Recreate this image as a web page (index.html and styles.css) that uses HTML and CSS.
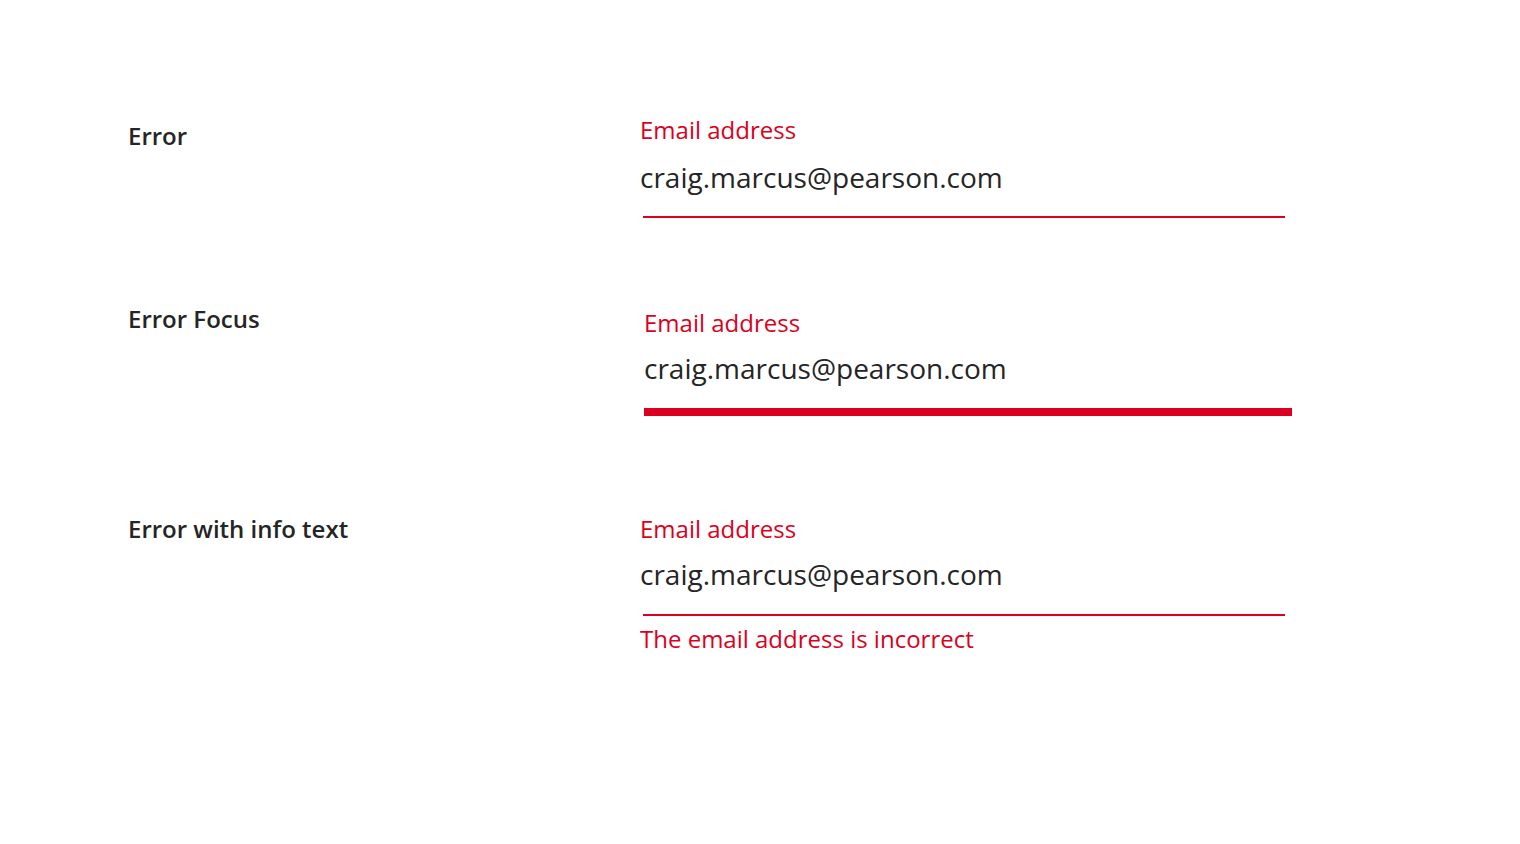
FILE: index.html
```html
<!DOCTYPE html>
<html>
<head>
<meta charset="utf-8">
<link rel="stylesheet" href="styles.css">
</head>
<body>
<main class="page">
  <section class="row row-error">
    <div class="state">Error</div>
    <div class="field">
      <div class="label">Email address</div>
      <div class="value">craig.marcus@pearson.com</div>
      <div class="line"></div>
    </div>
  </section>
  <section class="row row-focus">
    <div class="state">Error Focus</div>
    <div class="field">
      <div class="label">Email address</div>
      <div class="value">craig.marcus@pearson.com</div>
      <div class="line line-thick"></div>
    </div>
  </section>
  <section class="row row-info">
    <div class="state">Error with info text</div>
    <div class="field">
      <div class="label">Email address</div>
      <div class="value">craig.marcus@pearson.com</div>
      <div class="line"></div>
      <div class="info">The email address is incorrect</div>
    </div>
  </section>
</main>
</body>
</html>
```
FILE: styles.css
```css
html, body {
  margin: 0;
  padding: 0;
  background: #ffffff;
}
body {
  font-family: "Open Sans", "Noto Sans", sans-serif;
  color: #252525;
}
.page {
  padding: 115px 0 0 128px;
  display: flex;
  flex-direction: column;
}
.row {
  display: flex;
  align-items: flex-start;
}
.row-focus { margin-top: 90px; }
.row-info { margin-top: 98px; }
.state {
  width: 512px;
  flex: none;
  font-size: 24px;
  line-height: 30px;
  font-weight: 600;
  color: #252525;
}
.row-error .state { margin-top: 6px; }
.row-focus .state { margin-top: -4px; }
.row-focus .field { margin-left: 4px; }
.field {
  display: flex;
  flex-direction: column;
  width: 652px;
}
.label {
  font-size: 24px;
  line-height: 30px;
  color: #db0020;
}
.value {
  margin-top: 14px;
  font-size: 28px;
  line-height: 36px;
  color: #252525;
}
.row-focus .value,
.row-info .value { margin-top: 12px; }
.line {
  margin-top: 21px;
  margin-left: 3px;
  width: 642px;
  height: 2px;
  background: #db0020;
}
.row-info .line { margin-top: 22px; }
.line-thick {
  margin-left: 0;
  width: 648px;
  height: 8px;
  margin-top: 22px;
}
.info {
  margin-top: 8px;
  font-size: 24px;
  line-height: 30px;
  color: #db0020;
}
```
